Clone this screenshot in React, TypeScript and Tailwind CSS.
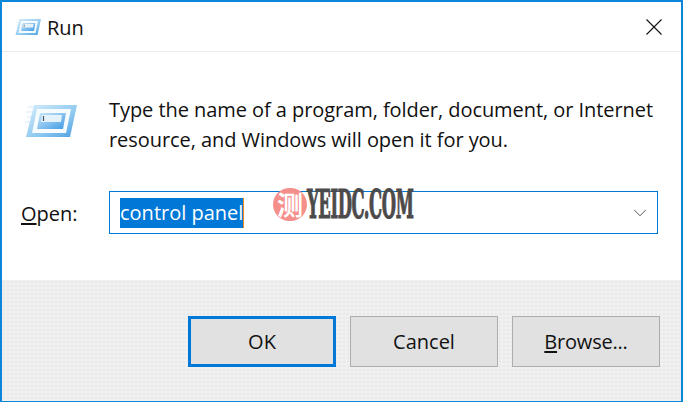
import { ChevronDown } from "lucide-react";

function RunIcon({ className }: { className: string }) {
  return (
    <svg viewBox="0 0 52 34" className={className}>
      <defs>
        <linearGradient id="runFill" x1="0" y1="0" x2="1" y2="1">
          <stop offset="0" stopColor="#d8eefb" />
          <stop offset="0.6" stopColor="#8cc8f0" />
          <stop offset="1" stopColor="#4a9fe0" />
        </linearGradient>
        <linearGradient id="runInner" x1="0" y1="0" x2="1" y2="1">
          <stop offset="0" stopColor="#cfe8f8" />
          <stop offset="1" stopColor="#3f9be6" />
        </linearGradient>
      </defs>
      <g stroke="#e3f1fb" strokeWidth="1.5">
        <path d="M3 3h10M1 8h9M2 13h7M0 18h7M3 23h4" />
      </g>
      <path d="M9 1h43l-7 32H1z" fill="url(#runFill)" />
      <path d="M12 5h34l-5 24H7z" fill="#f6fbfe" />
      <path d="M15 9h26l-3 16H12z" fill="url(#runInner)" />
      <path d="M17 11h20l-1 7H16z" fill="#e4f2fb" />
      <path d="M18.500 12v5" stroke="#45586a" strokeWidth="1.2" />
    </svg>
  );
}

const buttonClass =
  "w-[148px] h-[51px] pt-[1px] bg-[#e1e1e1] text-[20px] text-[#111] flex items-center justify-center";

export default function App() {
  return (
    <div
      className="relative w-[683px] h-[402px] flex flex-col bg-white border-x-2 border-t-2 border-b border-[#0b86d9] text-[#111] overflow-hidden"
      style={{ fontFamily: '"Open Sans", "Noto Sans", sans-serif' }}
    >
      <div className="h-[50px] shrink-0 flex items-center pl-[13px] pr-[19px] border-b border-[#ececec]">
        <RunIcon className="w-[26px] h-[18px]" />
        <span className="ml-[6px] pt-[2px] text-[20px] leading-none">Run</span>
        <svg viewBox="0 0 16 16" className="ml-auto w-[16px] h-[16px]" stroke="#111" strokeWidth="1.1">
          <path d="M0.500 0.500l15 15M15.500 0.500l-15 15" />
        </svg>
      </div>

      <div className="flex-1 flex flex-col">
        <div className="flex pl-[23px] pt-[52px]">
          <RunIcon className="w-[52px] h-[34px]" />
          <p className="ml-[32px] -mt-[9px] text-[20px] leading-[30px] whitespace-nowrap tracking-[-0.06px]">
            Type the name of a program, folder, document, or Internet
            <br />
            resource, and Windows will open it for you.
          </p>
        </div>
        <div className="flex items-center pl-[19px] mt-[36px]">
          <span className="w-[88px] pt-[2px] text-[20px]">
            <span className="underline underline-offset-2">O</span>pen:
          </span>
          <div className="w-[549px] h-[43px] border border-[#0078d7] pl-[10px] pr-[6px] flex items-center">
            <span className="h-[30px] bg-[#0078d7] text-white text-[20px] leading-[30px] border-r border-r-[#f28a1c]">
              control panel
            </span>
            <ChevronDown className="ml-auto w-[22px] h-[22px] text-[#444]" strokeWidth={1} />
          </div>
        </div>
      </div>

      <div className="h-[121px] shrink-0 bg-[#f0f0f0] bg-[radial-gradient(#e8e8e8_0.7px,transparent_0.8px)] bg-[size:4px_4px] flex justify-end gap-[14px] pt-[36px] pr-[21px]">
        <button className={`${buttonClass} border-[3px] border-[#0078d7]`}>OK</button>
        <button className={`${buttonClass} border border-[#adadad]`}>Cancel</button>
        <button className={`${buttonClass} border border-[#adadad]`}>
          <span className="tracking-[-0.2px]">
            <span className="underline underline-offset-2">B</span>rowse...
          </span>
        </button>
      </div>

      <div className="absolute left-[271px] top-[182px] flex items-center">
        <div className="w-[34px] h-[33px] rounded-full bg-[#f58f8b] text-white text-[26px] font-bold leading-none flex items-center justify-center" style={{ fontFamily: '"Noto Sans CJK SC", sans-serif' }}>
          测
        </div>
        <span
          className="w-[102px] text-[#4d4a4a] text-[40px] leading-none font-bold tracking-[-1px] inline-block origin-left scale-x-[0.41] whitespace-nowrap [-webkit-text-stroke:1.2px_#4d4a4a]"
          style={{ fontFamily: '"DejaVu Serif", serif' }}
        >
          YEIDC.COM
        </span>
      </div>
    </div>
  );
}
